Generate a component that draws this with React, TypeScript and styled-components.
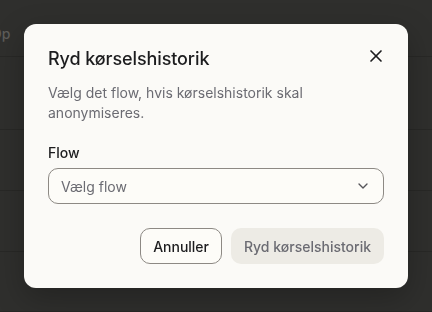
import styled, { createGlobalStyle } from "styled-components";
import { X, ChevronDown } from "lucide-react";

const GlobalStyle = createGlobalStyle`
  html, body {
    margin: 0;
    padding: 0;
    background: #2f2f2d;
  }
  body {
    font-family: "Inter", "Liberation Sans", sans-serif;
    -webkit-font-smoothing: antialiased;
  }
  * {
    box-sizing: border-box;
  }
`;

const App = () => {
  return (
    <>
      <GlobalStyle />
      <Page>
        <HeaderRow>
          <HeaderText>Op</HeaderText>
        </HeaderRow>
        <Row $height={73} />
        <Row $height={61} />
        <Row $height={61} />
        <Row $height={60} />
      </Page>
      <Overlay>
        <Dialog role="dialog" aria-labelledby="dlg-title">
          <CloseButton aria-label="Luk">
            <X size={20} strokeWidth={2} />
          </CloseButton>
          <Title id="dlg-title">Ryd kørselshistorik</Title>
          <Description>
            Vælg det flow, hvis kørselshistorik skal anonymiseres.
          </Description>
          <Field>
            <Label>Flow</Label>
            <Select type="button">
              <span>Vælg flow</span>
              <ChevronDown size={16} strokeWidth={2} color="#55555a" />
            </Select>
          </Field>
          <Footer>
            <Button $variant="outline">Annuller</Button>
            <Button $variant="muted" disabled>
              Ryd kørselshistorik
            </Button>
          </Footer>
        </Dialog>
      </Overlay>
    </>
  );
};

export default App;

const Page = styled.div`
  width: 432px;
  height: 312px;
  overflow: hidden;
  background: #2f2f2d;
  display: flex;
  flex-direction: column;
`;

const HeaderRow = styled.div`
  height: 57px;
  flex-shrink: 0;
  display: flex;
  align-items: flex-start;
  padding-top: 24px;
  border-bottom: 1px solid #282826;
`;

const HeaderText = styled.span`
  margin-left: -9px;
  font-size: 14px;
  line-height: 20px;
  font-weight: 500;
  color: #5d5c59;
`;

const Row = styled.div<{ $height: number }>`
  height: ${(p) => p.$height}px;
  flex-shrink: 0;
  border-bottom: 1px solid #282826;
`;

const Overlay = styled.div`
  position: fixed;
  inset: 0;
  display: flex;
  align-items: center;
  justify-content: center;
`;

const Dialog = styled.div`
  position: relative;
  width: 384px;
  height: 264px;
  background: #fbfaf7;
  border-radius: 12px;
  padding: 21px 24px 24px;
  display: flex;
  flex-direction: column;
  box-shadow: 0 10px 30px rgba(0, 0, 0, 0.25);
`;

const CloseButton = styled.button`
  position: absolute;
  top: 22px;
  right: 22px;
  width: 20px;
  height: 20px;
  padding: 0;
  border: none;
  background: transparent;
  color: #1c1c1e;
  display: flex;
  align-items: center;
  justify-content: center;
  cursor: pointer;
`;

const Title = styled.h2`
  margin: 0;
  font-size: 18px;
  line-height: 28px;
  font-weight: 500;
  color: #1c1c1e;
  letter-spacing: -0.1px;
`;

const Description = styled.p`
  margin: 10px 0 0;
  font-size: 14px;
  line-height: 20px;
  color: #6b6b72;
  padding-right: 40px;
`;

const Field = styled.div`
  margin-top: 20px;
  display: flex;
  flex-direction: column;
  gap: 5px;
`;

const Label = styled.label`
  font-size: 14px;
  line-height: 20px;
  font-weight: 500;
  color: #1c1c1e;
`;

const Select = styled.button`
  height: 36px;
  width: 100%;
  border: 1px solid #8d8984;
  border-radius: 10px;
  background: #fdfcf8;
  padding: 0 12px;
  display: flex;
  align-items: center;
  justify-content: space-between;
  font-family: inherit;
  font-size: 14px;
  color: #6b6b72;
  cursor: pointer;
`;

const Footer = styled.div`
  margin-top: 24px;
  display: flex;
  justify-content: flex-end;
  gap: 9px;
`;

const Button = styled.button<{ $variant: "outline" | "muted" }>`
  height: 36px;
  padding: 0 12px;
  border-radius: 10px;
  font-family: inherit;
  font-size: 14px;
  font-weight: 500;
  cursor: pointer;
  border: 1px solid ${(p) => (p.$variant === "outline" ? "#8d8984" : "transparent")};
  background: ${(p) => (p.$variant === "outline" ? "#fdfcf8" : "#edebe5")};
  color: ${(p) => (p.$variant === "outline" ? "#1c1c1e" : "#6b6b72")};
  &:disabled {
    cursor: default;
  }
`;
